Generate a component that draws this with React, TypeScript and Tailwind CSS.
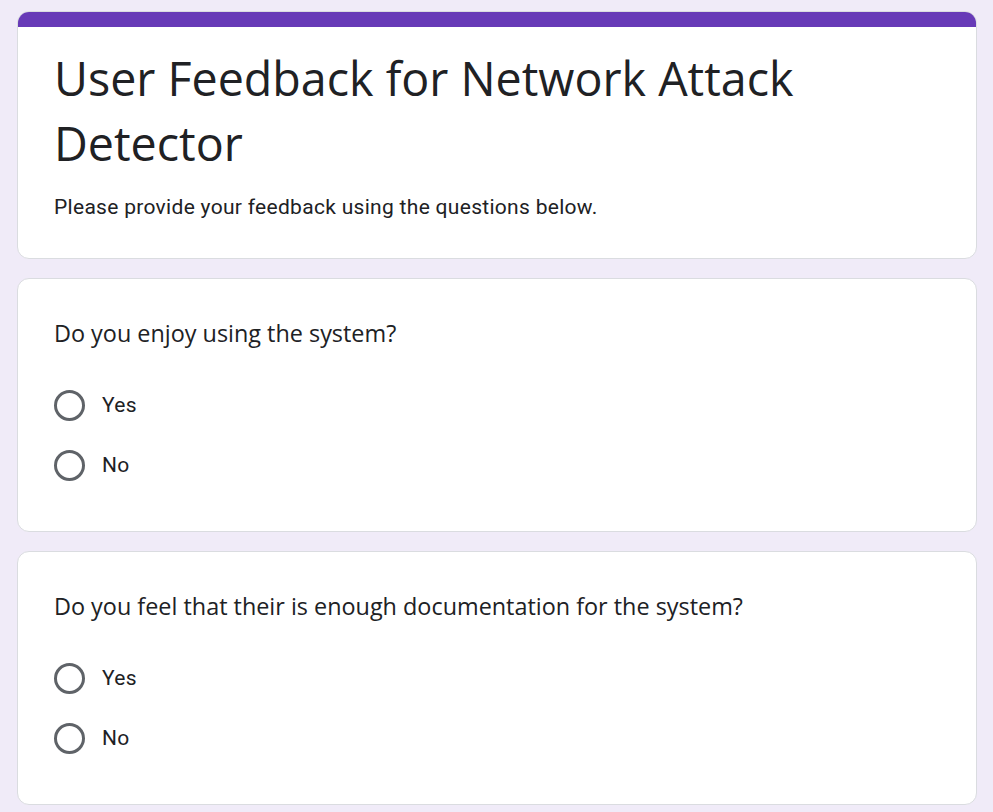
import { ReactNode } from 'react';

const questions = [
  { id: 1, text: 'Do you enjoy using the system?', options: ['Yes', 'No'] },
  { id: 2, text: 'Do you feel that their is enough documentation for the system?', options: ['Yes', 'No'] },
];

function Card({ children, className = '' }: { children: ReactNode; className?: string }) {
  return (
    <div className={`bg-white border border-[#dadce0] rounded-[12px] overflow-hidden ${className}`}>
      {children}
    </div>
  );
}

function Radio({ label }: { label: string }) {
  return (
    <label className="flex items-center h-[60px] cursor-pointer">
      <span className="w-[31px] h-[31px] rounded-full border-[3px] border-[#5f6368] shrink-0" />
      <span className="ml-[17px] pt-[2px] text-[21px] tracking-[0.3px] text-[#202124] font-['Roboto',sans-serif]">{label}</span>
    </label>
  );
}

export default function App() {
  return (
    <div className="min-h-screen bg-[#f0ebf8] pt-[11px] pl-[17px] pr-[16px] pb-4">
      <div className="flex flex-col gap-[19px]">
        {/* header */}
        <Card>
          <div className="h-[15px] bg-[#673ab7]" />
          <div className="px-[36px] pt-[19px] pb-[37px]">
            <h1 className="text-[46.6px] leading-[65px] text-[#202124] font-['Open_Sans',sans-serif]">
              User Feedback for Network Attack Detector
            </h1>
            <p className="mt-[17px] text-[21px] tracking-[0.3px] leading-[28px] text-[#202124] font-['Roboto',sans-serif]">
              Please provide your feedback using the questions below.
            </p>
          </div>
        </Card>

        {questions.map(q => (
          <Card key={q.id}>
            <div className="px-[36px] pt-[38px] pb-[36px]">
              <div className="text-[23.4px] leading-[32px] text-[#202124] font-['Open_Sans',sans-serif]">
                {q.text}
              </div>
              <div className="mt-[26px]">
                {q.options.map(o => (
                  <Radio key={o} label={o} />
                ))}
              </div>
            </div>
          </Card>
        ))}
      </div>
    </div>
  );
}
